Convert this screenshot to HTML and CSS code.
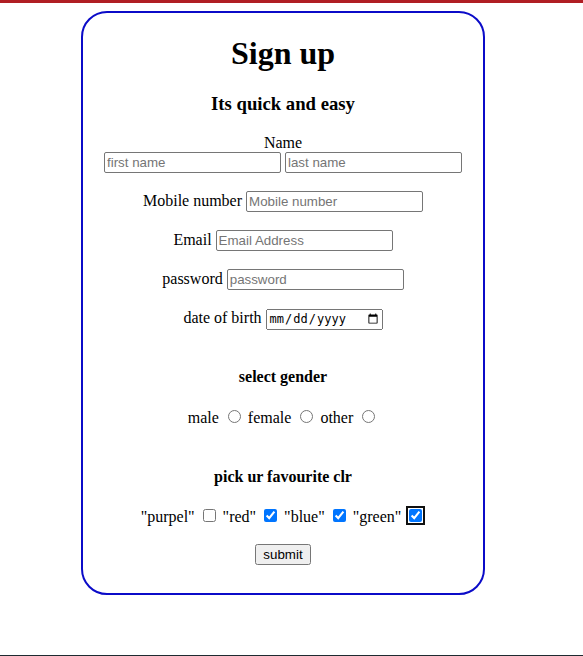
FILE: index.html
```html
<!DOCTYPE html>
<html>
<head>
<meta charset="utf-8">
<link rel="stylesheet" href="styles.css">
</head>
<body>
<div class="topbar"></div>
<div class="page">
  <form class="card">
    <h1>Sign up</h1>
    <h3>Its quick and easy</h3>
    <label class="row-label">Name</label><br>
    <input type="text" class="field" placeholder="first name">
    <input type="text" class="field" placeholder="last name">
    <p>Mobile number <input type="text" class="field" placeholder="Mobile number"></p>
    <p>Email <input type="text" class="field" placeholder="Email Address"></p>
    <p>password <input type="password" class="field" placeholder="password"></p>
    <p>date of birth <input type="date" class="date"></p>
    <h4 class="gender">select gender</h4>
    <p>male <input type="radio" name="g"> female <input type="radio" name="g"> other <input type="radio" name="g"></p>
    <h4 class="colors">pick ur favourite clr</h4>
    <p>"purpel" <input type="checkbox"> "red" <input type="checkbox" checked> "blue" <input type="checkbox" checked> "green" <input type="checkbox" class="focused" checked></p>
    <button type="button">submit</button>
  </form>
</div>
<div class="bottombar"></div>
</body>
</html>
```
FILE: styles.css
```css
html, body {
  margin: 0;
  padding: 0;
  background: #fff;
  font-family: "Liberation Serif", "Times New Roman", serif;
  font-size: 16px;
  color: #000;
  height: 656px;
  overflow: hidden;
  position: relative;
}
.topbar {
  height: 3px;
  background: #b01e23;
}
.page {
  padding: 8px 0 0 81px;
}
.card {
  width: 400px;
  border: 2px solid #0b0bc8;
  border-radius: 26px;
  text-align: center;
  padding: 0 0 28px;
}
.card h1 {
  font-size: 32px;
  margin: 22px 0 21px;
}
.card h3 {
  font-size: 18.72px;
  margin: 18.72px 0 19px;
}
.card h4 {
  font-size: 16px;
}
.card h4.gender {
  margin: 38px 0 20px;
}
.card h4.colors {
  margin: 39px 0 19px;
}
.card p {
  margin: 16px 0;
  line-height: 23px;
}
.field {
  box-sizing: border-box;
  width: 177px;
  height: 21px;
  font-family: "Liberation Sans", Arial, sans-serif;
  font-size: 13.33px;
  border: 1px solid #767676;
  border-radius: 2px;
  padding: 1px 2px;
}
.date {
  box-sizing: border-box;
  width: 117px;
  height: 21px;
  font-family: "DejaVu Sans Mono", "Liberation Mono", monospace;
  font-size: 12px;
}
input::placeholder {
  color: #757575;
}
.focused {
  outline: 2px solid #101010;
  outline-offset: 1px;
  border-radius: 2px;
}
button {
  font-family: "Liberation Sans", Arial, sans-serif;
  font-size: 13.33px;
}
.bottombar {
  position: absolute;
  left: 0;
  right: 0;
  bottom: 0;
  height: 1px;
  background: #1e2a30;
}
```
